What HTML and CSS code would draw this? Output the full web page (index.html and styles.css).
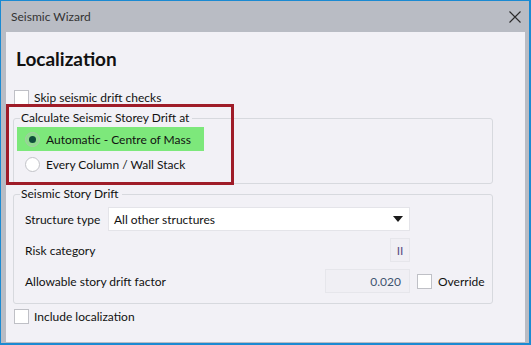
FILE: index.html
```html
<!DOCTYPE html>
<html lang="en">
  <head>
    <meta charset="UTF-8" />
    <title>Seismic Wizard</title>
    <link rel="stylesheet" href="styles.css">
  </head>
  <body>
    <div class="window">
      <div class="titlebar">
        <span class="title">Seismic Wizard</span>
        <svg class="close" width="12" height="12" viewBox="0 0 12 12">
          <path d="M0.5 0.5 L11.5 11.5 M11.5 0.5 L0.5 11.5" stroke="#2b2b2b" stroke-width="1.1" fill="none" />
        </svg>
      </div>

      <div class="frame">
        <div class="content">
          <h1>Localization</h1>

          <label class="check-row">
            <span class="checkbox"></span>
            Skip seismic drift checks
          </label>

          <fieldset class="group group-calc">
            <legend>Calculate Seismic Storey Drift at</legend>
            <div class="radio-row selected">
              <span class="radio checked"></span>
              Automatic - Centre of Mass
            </div>
            <div class="radio-row">
              <span class="radio"></span>
              Every Column / Wall Stack
            </div>
          </fieldset>

          <fieldset class="group group-drift">
            <legend>Seismic Story Drift</legend>
            <div class="form-grid">
              <span class="field-label">Structure type</span>
              <div class="combo">
                <span>All other structures</span>
                <span class="combo-arrow"></span>
              </div>
              <span></span>

              <span class="field-label">Risk category</span>
              <div class="readonly small">II</div>
              <span></span>

              <span class="field-label">Allowable story drift factor</span>
              <div class="readonly factor">0.020</div>
              <label class="check-row override">
                <span class="checkbox"></span>
                Override
              </label>
            </div>
          </fieldset>

          <label class="check-row include">
            <span class="checkbox"></span>
            Include localization
          </label>

          <div class="highlight-box"></div>
        </div>
      </div>
    </div>
  </body>
</html>
```

FILE: styles.css
```css
:root {
  --accent: #1b8ad2;
  --chrome: #b9bcc4;
  --panel: #f2f1f6;
  --group-border: #d7d9de;
  --text: #111;
  --field-border: #e4e4e9;
}

* {
  margin: 0;
  padding: 0;
  box-sizing: border-box;
}

body {
  font-family: "Segoe UI", Lato, sans-serif;
  font-size: 12px;
  color: var(--text);
  background: #fff;
}

.window {
  width: 531px;
  height: 345px;
  display: flex;
  flex-direction: column;
  background: var(--chrome);
  border-top: 1px solid var(--accent);
  border-left: 1px solid var(--accent);
  border-right: 2px solid var(--accent);
  border-bottom: 2px solid var(--accent);
}

.titlebar {
  height: 31px;
  display: flex;
  align-items: center;
  justify-content: space-between;
  padding: 0 8px 0 10px;
  color: #333;
}

.close {
  display: block;
}

.frame {
  flex: 1;
  display: flex;
  padding: 0 4px 1px 5px;
}

.content {
  flex: 1;
  position: relative;
  background: var(--panel);
  padding: 15px 0 0 7px;
}

h1 {
  font-size: 19px;
  font-weight: 700;
  line-height: 24px;
  margin-left: 3px;
  margin-bottom: 19px;
}

.check-row {
  display: flex;
  align-items: center;
  gap: 5px;
  height: 15px;
  margin-left: 1px;
  white-space: nowrap;
}

.checkbox {
  width: 15px;
  height: 15px;
  background: #fff;
  border: 1px solid #bfc0c6;
  flex: none;
}

.group {
  width: 480px;
  border: 1px solid var(--group-border);
  border-radius: 3px;
  padding: 2px 3px 7px 3px;
}

.group legend {
  line-height: 14px;
  margin-left: 3px;
  padding: 0 3px 0 1px;
}

.group-calc {
  margin-top: 6px;
}

.radio-row {
  display: flex;
  align-items: center;
  gap: 6px;
  height: 24px;
  padding-left: 8px;
  width: 187px;
}

.radio-row + .radio-row {
  margin-top: 1px;
}

.radio-row.selected {
  background: #7de87b;
}

.radio {
  width: 15px;
  height: 15px;
  border-radius: 50%;
  background: #fff;
  border: 1px solid #c2c3c8;
  flex: none;
  display: flex;
  align-items: center;
  justify-content: center;
}

.radio.checked {
  background: #8fdc8d;
  border-color: #a9c9aa;
}

.radio.checked::after {
  content: "";
  width: 7px;
  height: 7px;
  border-radius: 50%;
  background: #0f4d3b;
}

.group-drift {
  margin-top: 3px;
  padding: 6px 0 10px 3px;
}

.form-grid {
  display: grid;
  grid-template-columns: 83px 302px auto;
  grid-auto-rows: 24px;
  row-gap: 7px;
  align-items: center;
  margin-left: 8px;
}

.field-label {
  white-space: nowrap;
}

.combo {
  height: 24px;
  background: #fff;
  border: 1px solid var(--field-border);
  display: flex;
  align-items: center;
  justify-content: space-between;
  padding: 0 6px 0 5px;
}

.combo-arrow {
  width: 0;
  height: 0;
  border-left: 5px solid transparent;
  border-right: 5px solid transparent;
  border-top: 6px solid #1a1a1a;
}

.readonly {
  justify-self: end;
  height: 24px;
  background: #f0eff4;
  border: 1px solid #e6e6eb;
  display: flex;
  align-items: center;
}

.readonly.small {
  width: 20px;
  justify-content: center;
  color: #5b4c82;
}

.readonly.factor {
  width: 85px;
  justify-content: flex-end;
  padding-right: 8px;
  color: #3f5470;
}

.override {
  margin-left: 7px;
  gap: 6px;
}

.include {
  margin-top: 5px;
}

.highlight-box {
  position: absolute;
  left: 0;
  top: 72px;
  width: 228px;
  height: 81px;
  border: 3px solid #9f1c28;
}
```
